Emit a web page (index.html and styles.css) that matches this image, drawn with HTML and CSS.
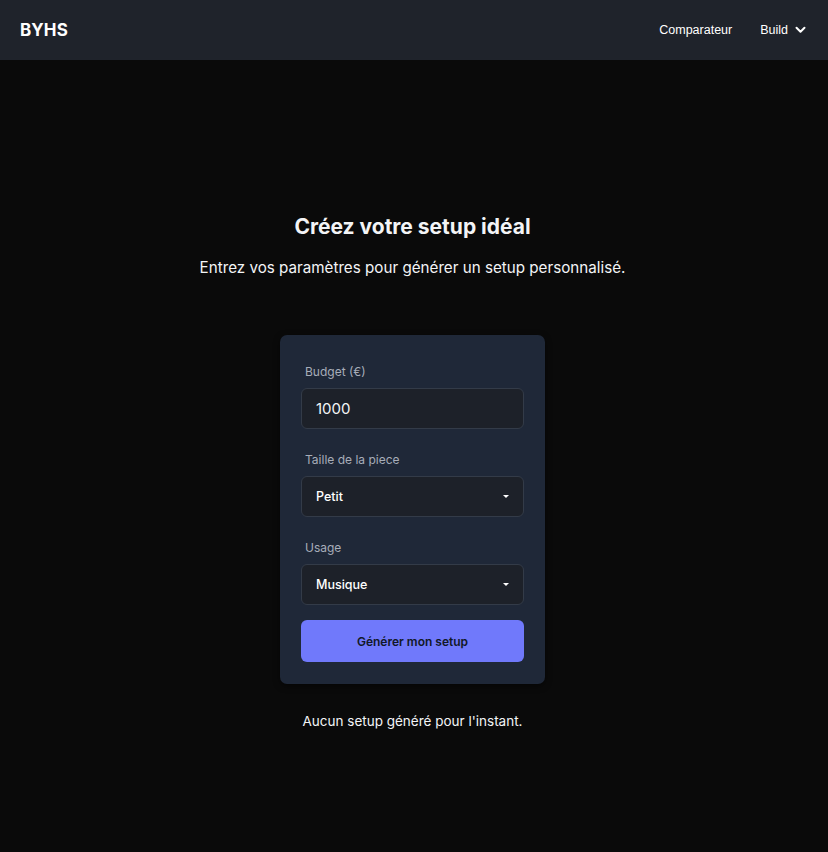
FILE: index.html
```html
<!DOCTYPE html>
<html lang="fr">
<head>
<meta charset="utf-8">
<title>BYHS</title>
<link rel="stylesheet" href="styles.css">
</head>
<body>
<header class="topbar">
  <div class="brand">BYHS</div>
  <nav class="nav">
    <a class="nav-link">Comparateur</a>
    <a class="nav-link nav-drop">Build
      <svg class="chev" width="11" height="8" viewBox="0 0 11 8"><path d="M1.5 1.8 L5.5 5.8 L9.5 1.8" fill="none" stroke="#fff" stroke-width="2" stroke-linecap="round" stroke-linejoin="round"/></svg>
    </a>
  </nav>
</header>
<main class="main">
  <h1 class="title">Créez votre setup idéal</h1>
  <p class="subtitle">Entrez vos paramètres pour générer un setup personnalisé.</p>
  <form class="card">
    <label class="label">Budget (€)</label>
    <div class="field"><span class="field-value">1000</span></div>
    <label class="label">Taille de la piece</label>
    <div class="field select"><span class="select-value">Petit</span><span class="caret"></span></div>
    <label class="label">Usage</label>
    <div class="field select"><span class="select-value">Musique</span><span class="caret"></span></div>
    <button type="button" class="btn">Générer mon setup</button>
  </form>
  <p class="empty">Aucun setup généré pour l'instant.</p>
</main>
</body>
</html>
```
FILE: styles.css
```css
* { box-sizing: border-box; }
html, body { margin: 0; padding: 0; }
body {
  background: #0a0a0a;
  color: #f3f4f6;
  font-family: Inter, "Noto Sans", sans-serif;
  min-height: 852px;
}
.topbar {
  height: 60px;
  background: #1f232b;
  display: flex;
  align-items: center;
  justify-content: space-between;
  padding: 0 22px 0 20px;
}
.brand {
  font-weight: 700;
  font-size: 17px;
  letter-spacing: 0.1px;
  color: #fff;
}
.nav {
  display: flex;
  align-items: center;
  gap: 28px;
  font-family: "Liberation Sans", Arial, sans-serif;
  font-size: 12.5px;
  color: #fff;
}
.nav-link { color: #fff; }
.nav-drop { display: flex; align-items: center; gap: 7px; }
.chev { display: block; }
.main {
  display: flex;
  flex-direction: column;
  align-items: center;
  padding: 153px 3px 0 0;
}
.title {
  margin: 0;
  font-size: 21px;
  font-weight: 700;
  line-height: 28px;
  color: #f3f4f6;
}
.subtitle {
  margin: 15px 0 0;
  font-size: 15.2px;
  line-height: 24px;
  color: #f3f4f6;
}
.card {
  margin-top: 55px;
  width: 265px;
  background: #1f2838;
  border-radius: 7px;
  padding: 29px 21px 22px;
  display: flex;
  flex-direction: column;
  box-shadow: 0 2px 6px rgba(0,0,0,0.5);
}
.label {
  display: block;
  font-size: 12px;
  line-height: 16px;
  color: #a7adb8;
  padding-left: 4px;
  margin-bottom: 8px;
}
.field {
  height: 41px;
  background: #1d2129;
  border: 1px solid #333b48;
  border-radius: 6px;
  display: flex;
  align-items: center;
  padding: 0 14px;
  margin-bottom: 23px;
}
.field-value {
  font-size: 15px;
  color: #f3f4f6;
}
.select { justify-content: space-between; padding-right: 14px; }
.select-value {
  font-size: 12.5px;
  font-weight: 500;
  color: #fff;
}
.caret {
  width: 0; height: 0;
  border-left: 3.5px solid transparent;
  border-right: 3.5px solid transparent;
  border-top: 3.5px solid #fff;
}
.card .field:last-of-type { margin-bottom: 15px; }
.btn {
  height: 42px;
  border: none;
  border-radius: 6px;
  background: #7079fb;
  color: #111827;
  font-family: Inter, "Noto Sans", sans-serif;
  font-size: 12px;
  font-weight: 600;
}
.empty {
  margin: 27px 0 0;
  font-size: 13.5px;
  line-height: 20px;
  color: #f3f4f6;
}
```
